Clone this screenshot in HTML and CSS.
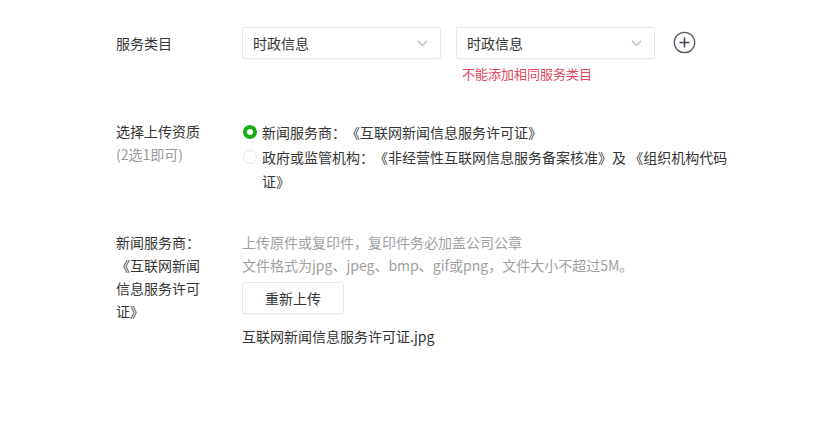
FILE: index.html
```html
<!DOCTYPE html>
<html lang="zh-CN">
<head>
    <meta charset="UTF-8">
    <meta name="viewport" content="width=device-width, initial-scale=1.0">
    <title>服务类目</title>
    <link rel="stylesheet" href="styles.css">
</head>
<body>
    <div class="form">
        <div class="row row-category">
            <div class="label">服务类目</div>
            <div class="content">
                <div class="selects">
                    <div class="select-col">
                        <div class="select">
                            <span>时政信息</span>
                            <svg class="arrow" width="11" height="7" viewBox="0 0 11 7"><path d="M1 1 L5.5 5.5 L10 1" fill="none" stroke="#b5b5b5" stroke-width="1.2"/></svg>
                        </div>
                    </div>
                    <div class="select-col">
                        <div class="select">
                            <span>时政信息</span>
                            <svg class="arrow" width="11" height="7" viewBox="0 0 11 7"><path d="M1 1 L5.5 5.5 L10 1" fill="none" stroke="#b5b5b5" stroke-width="1.2"/></svg>
                        </div>
                        <p class="error">不能添加相同服务类目</p>
                    </div>
                    <svg class="add" width="23" height="23" viewBox="0 0 23 23">
                        <circle cx="11.5" cy="11.5" r="10.2" fill="none" stroke="#5b5b66" stroke-width="1.3"/>
                        <path d="M11.5 6.5 V16.5 M6.5 11.5 H16.5" stroke="#4a4a55" stroke-width="1.6"/>
                    </svg>
                </div>
            </div>
        </div>

        <div class="row row-type">
            <div class="label">选择上传资质<br><span class="sub">(2选1即可)</span></div>
            <div class="content">
                <label class="radio">
                    <span class="dot checked"></span>
                    <span class="radio-text">新闻服务商：《互联网新闻信息服务许可证》</span>
                </label>
                <label class="radio">
                    <span class="dot"></span>
                    <span class="radio-text">政府或监管机构：《非经营性互联网信息服务备案核准》及 《组织机构代码证》</span>
                </label>
            </div>
        </div>

        <div class="row row-upload">
            <div class="label label-narrow">新闻服务商：《互联网新闻信息服务许可证》</div>
            <div class="content">
                <p class="hint">上传原件或复印件，复印件务必加盖公司公章</p>
                <p class="hint">文件格式为jpg、jpeg、bmp、gif或png，文件大小不超过5M。</p>
                <button class="btn">重新上传</button>
                <p class="file">互联网新闻信息服务许可证.jpg</p>
            </div>
        </div>
    </div>
</body>
</html>
```

FILE: styles.css
```css
body {
    margin: 0;
    font-family: "Noto Sans CJK SC", "Microsoft YaHei", sans-serif;
    font-size: 14px;
    color: #353535;
    background: #fff;
    text-spacing-trim: space-all;
}
p {
    margin: 0;
}
.form {
    padding: 27px 0 0 116px;
}
.row {
    display: flex;
}
.label {
    width: 126px;
    flex-shrink: 0;
    line-height: 23.3px;
}
.label-narrow {
    width: 88px;
    margin-right: 38px;
}
.label .sub {
    color: #9a9a9a;
}
.row-category .label {
    line-height: 32px;
}
.selects {
    display: flex;
    align-items: flex-start;
}
.select-col {
    margin-right: 15px;
}
.select {
    width: 199px;
    height: 32px;
    box-sizing: border-box;
    border: 1px solid #e7e7eb;
    border-radius: 2px;
    box-shadow: 0 1px 1px rgba(0, 0, 0, 0.03);
    padding: 0 12px 0 10px;
    display: flex;
    align-items: center;
    justify-content: space-between;
}
.arrow {
    margin-top: 1px;
}
.add {
    margin: 4px 0 0 3px;
}
.error {
    color: #e0485a;
    font-size: 13px;
    line-height: 23px;
    margin: 3px 0 0 6px;
}
.row-type {
    margin-top: 35px;
}
.row-type .label {
    line-height: 23px;
}
.radio {
    display: flex;
    align-items: flex-start;
    line-height: 24.5px;
}
.dot {
    width: 14px;
    height: 14px;
    box-sizing: border-box;
    border-radius: 50%;
    border: 1px solid #e3e3e3;
    margin: 5px 5px 0 1px;
    flex-shrink: 0;
}
.dot.checked {
    border: 4px solid #1aad19;
}
.radio-text {
    width: 474px;
}
.row-upload {
    margin-top: 37px;
}
.hint {
    color: #a0a0a0;
    line-height: 23.3px;
}
.btn {
    display: block;
    margin-top: 5px;
    width: 102px;
    height: 32px;
    font-family: inherit;
    font-size: 14px;
    color: #353535;
    background: #fff;
    border: 1px solid #e4e8eb;
    border-radius: 3px;
    box-shadow: 0 1px 1px rgba(0, 0, 0, 0.03);
}
.file {
    margin-top: 11px;
    line-height: 23px;
}
```
